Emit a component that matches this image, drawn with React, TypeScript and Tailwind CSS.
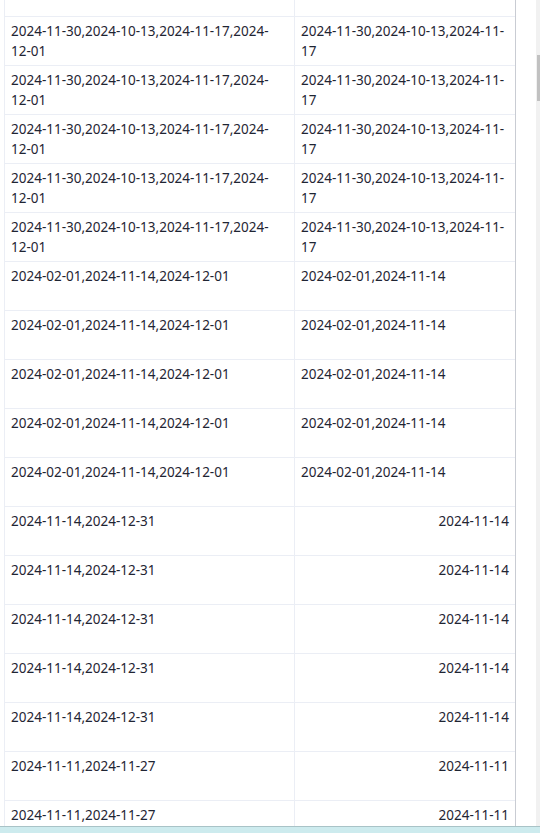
const groups = [
  { n: 5, left: ["2024-11-30,2024-10-13,2024-11-17,2024-", "12-01"], right: ["2024-11-30,2024-10-13,2024-11-", "17"], align: "left" },
  { n: 5, left: ["2024-02-01,2024-11-14,2024-12-01"], right: ["2024-02-01,2024-11-14"], align: "left" },
  { n: 5, left: ["2024-11-14,2024-12-31"], right: ["2024-11-14"], align: "right" },
  { n: 2, left: ["2024-11-11,2024-11-27"], right: ["2024-11-11"], align: "right" },
]

const rows = groups.flatMap((g) => Array.from({ length: g.n }, () => g))

const Lines = ({ lines }: { lines: string[] }) => (
  <>
    {lines.map((l, i) => (
      <div key={i}>{l}</div>
    ))}
  </>
)

export default function App() {
  return (
    <div
      className="w-[540px] h-[833px] overflow-hidden bg-white flex flex-col text-[#1f2533] text-[13.5px] leading-[20px]"
      style={{ fontFamily: '"Noto Sans", "Open Sans", sans-serif' }}
    >
      <div className="flex flex-1 min-h-0">
        <div className="ml-[4px] w-[512px] border-l border-l-[#ebeef5] border-r border-r-[#c9ccd3] overflow-hidden">
          <div className="grid grid-cols-[290px_220px] h-[17px] border-b border-[#ebeef5]">
            <div className="border-r border-[#ebeef5]" />
            <div />
          </div>
          {rows.map((r, i) => (
            <div key={i} className="grid grid-cols-[290px_220px] h-[49px] border-b border-[#ebeef5]">
              <div className="border-r border-[#ebeef5] px-[6px] pt-[4px]">
                <Lines lines={r.left} />
              </div>
              <div className={`px-[6px] pt-[4px] ${r.align === "right" ? "text-right" : "text-left"}`}>
                <Lines lines={r.right} />
              </div>
            </div>
          ))}
        </div>
        <div className="w-[20px]" />
        <div className="w-[4px] bg-[#f1f1f1] relative">
          <div className="absolute left-[1px] right-0 top-[55px] h-[46px] bg-[#c1c1c1]" />
        </div>
      </div>
      <div className="h-[7px] bg-[#cdebee] border-t border-[#a9c3c7]" />
    </div>
  )
}
